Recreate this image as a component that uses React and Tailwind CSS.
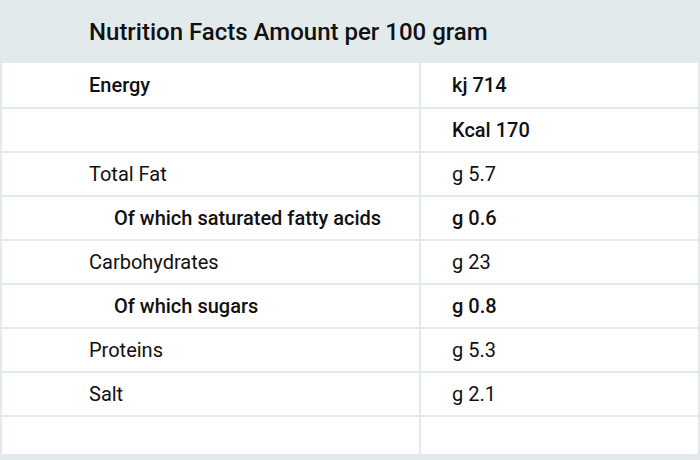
const rows = [
  { name: "Energy", value: "kj 714", strong: true, h: "h-[44px]" },
  { name: "", value: "Kcal 170", strong: true },
  { name: "Total Fat", value: "g 5.7" },
  { name: "Of which saturated fatty acids", value: "g 0.6", strong: true, indent: true },
  { name: "Carbohydrates", value: "g 23" },
  { name: "Of which sugars", value: "g 0.8", strong: true, indent: true },
  { name: "Proteins", value: "g 5.3" },
  { name: "Salt", value: "g 2.1" },
  { name: "", value: "", h: "h-[37px]" },
];

export default function App() {
  return (
    <div className="w-[700px] h-[460px] bg-[#e2eaeb] text-[#111] font-['Roboto',sans-serif]">
      <div className="h-[63px] flex items-center pl-[89px] text-[24px] font-medium">
        Nutrition Facts Amount per 100 gram
      </div>
      <div className="grid grid-cols-[417px_277px] gap-[2px] pl-[2px]">
        {rows.map((r, i) => (
          <div key={i} className="contents">
            <div
              className={`${r.h || "h-[42px]"} bg-white flex items-center text-[20px] whitespace-nowrap ${
                r.indent ? "pl-[112px]" : "pl-[87px]"
              } ${r.strong ? "font-medium" : ""}`}
            >
              {r.name}
            </div>
            <div
              className={`${r.h || "h-[42px]"} bg-white flex items-center pl-[31px] text-[20px] ${
                r.strong ? "font-medium" : ""
              }`}
            >
              {r.value}
            </div>
          </div>
        ))}
      </div>
    </div>
  );
}
